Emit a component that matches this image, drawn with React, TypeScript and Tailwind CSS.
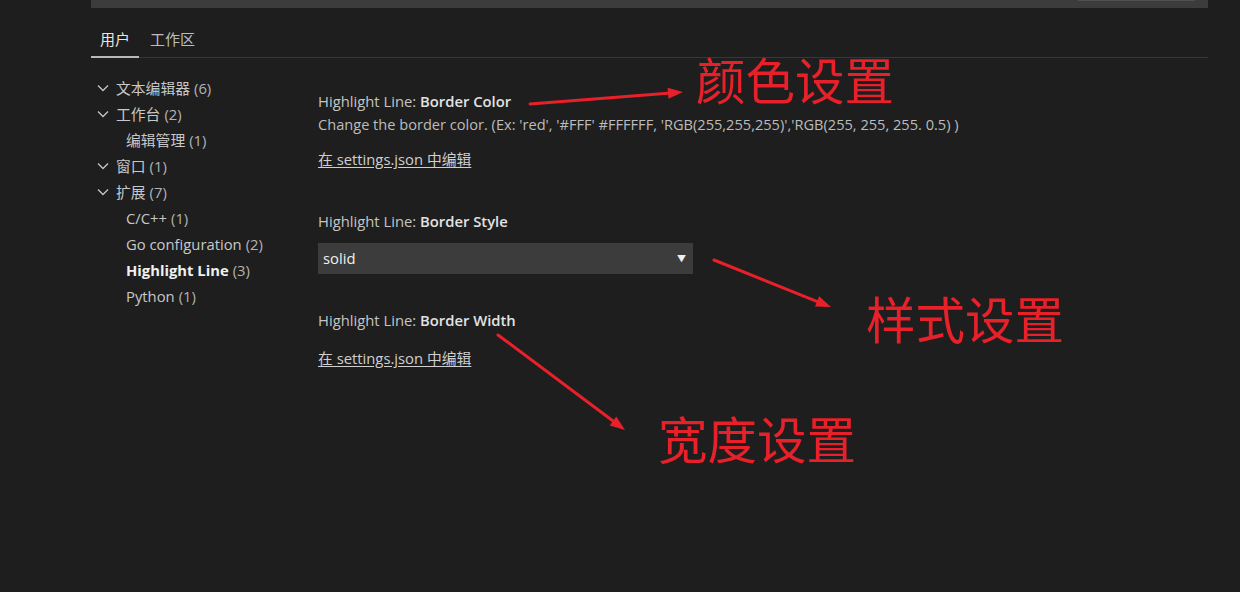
import React from "react";

const FONT = '"Open Sans", "Noto Sans CJK SC", sans-serif';
const CJK = '"Noto Sans CJK SC", sans-serif';

function Chevron() {
  return (
    <svg width="12" height="8" viewBox="0 0 12 8" className="shrink-0">
      <polyline points="1,1.5 6,6.5 11,1.5" fill="none" stroke="#c5c5c5" strokeWidth="1.3" />
    </svg>
  );
}

type Item = { label: string; count: number; level: number; bold?: boolean };

const items: Item[] = [
  { label: "文本编辑器", count: 6, level: 1 },
  { label: "工作台", count: 2, level: 1 },
  { label: "编辑管理", count: 1, level: 2 },
  { label: "窗口", count: 1, level: 1 },
  { label: "扩展", count: 7, level: 1 },
  { label: "C/C++", count: 1, level: 2 },
  { label: "Go configuration", count: 2, level: 2 },
  { label: "Highlight Line", count: 3, level: 2, bold: true },
  { label: "Python", count: 1, level: 2 },
];

function Title({ name }: { name: string }) {
  return (
    <div className="text-[14.8px] leading-[20px] text-[#c4c4c4]">
      Highlight Line: <span className="font-semibold text-[#e2e2e2]">{name}</span>
    </div>
  );
}

function EditLink({ className }: { className: string }) {
  return (
    <div className={"text-[14.8px] leading-[20px] text-[#cfcfcf] underline underline-offset-2 " + className}>
      在 settings.json 中编辑
    </div>
  );
}

function Arrow({ x1, y1, x2, y2 }: { x1: number; y1: number; x2: number; y2: number }) {
  const ang = Math.atan2(y2 - y1, x2 - x1);
  const L = 15;
  const W = 5.5;
  const bx = x2 - L * Math.cos(ang);
  const by = y2 - L * Math.sin(ang);
  const px = -Math.sin(ang) * W;
  const py = Math.cos(ang) * W;
  const lx = x2 - (L - 3) * Math.cos(ang);
  const ly = y2 - (L - 3) * Math.sin(ang);
  return (
    <g>
      <line x1={x1} y1={y1} x2={lx} y2={ly} stroke="#e8202a" strokeWidth="3" strokeLinecap="round" />
      <polygon points={`${x2},${y2} ${bx + px},${by + py} ${bx - px},${by - py}`} fill="#e8202a" />
    </g>
  );
}

export default function App() {
  return (
    <div className="relative w-[1240px] h-[592px] overflow-hidden bg-[#1e1e1e]" style={{ fontFamily: FONT }}>
      {/* top search bar */}
      <div className="ml-[91px] w-[1117px] h-[8px] bg-[#3c3c3c] flex justify-end pr-[13px]">
        <div className="w-[117px] h-[1px] bg-[#505050]" />
      </div>

      {/* tabs */}
      <div className="ml-[91px] w-[1117px] h-[50px] flex items-end border-b border-[#373737]">
        <div className="px-[9px] pb-[7px] text-[15px] leading-[20px] text-[#e6e6e6] border-b-2 border-[#b8b8b8] -mb-px">用户</div>
        <div className="pl-[11px] pb-[9px] text-[15px] leading-[20px] text-[#bdbdbd] -mb-px">工作区</div>
      </div>

      {/* body */}
      <div className="ml-[91px] flex">
        {/* tree */}
        <div className="w-[227px] pt-[17px] flex flex-col">
          {items.map((it) => (
            <div key={it.label} className="h-[26px] flex items-center pl-[6px] text-[14.8px] text-[#c8c8c8]">
              {it.level === 1 ? (
                <>
                  <Chevron />
                  <span className="ml-[7px]">{it.label}</span>
                </>
              ) : (
                <span className="ml-[29px]">
                  <span className={it.bold ? "font-bold text-[#f0f0f0]" : ""}>{it.label}</span>
                </span>
              )}
              <span className="ml-[4px] text-[#b4b4b4]">({it.count})</span>
            </div>
          ))}
        </div>

        {/* settings */}
        <div className="pt-[33px] flex flex-col">
          <Title name="Border Color" />
          <div className="mt-[2px] text-[14.6px] leading-[22px] text-[#bcbcbc] whitespace-nowrap">
            Change the border color. (Ex: 'red', '#FFF' #FFFFFF, 'RGB(255,255,255)','RGB(255, 255, 255. 0.5) )
          </div>
          <EditLink className="mt-[14px]" />

          <div className="mt-[42px]">
            <Title name="Border Style" />
          </div>
          <div className="mt-[12px] w-[375px] h-[31px] bg-[#3c3c3c] flex items-center justify-between pl-[5px] pr-[7px]">
            <span className="text-[14.8px] text-[#f0f0f0]">solid</span>
            <span className="text-[9px] text-[#f0f0f0]">▼</span>
          </div>

          <div className="mt-[36px]">
            <Title name="Border Width" />
          </div>
          <EditLink className="mt-[18px]" />
        </div>
      </div>

      {/* annotations */}
      <svg className="absolute inset-0 pointer-events-none" width="1240" height="592">
        <Arrow x1={530} y1={104} x2={683} y2={92} />
        <Arrow x1={714} y1={260} x2={831} y2={307} />
        <Arrow x1={498} y1={335} x2={625} y2={430} />
      </svg>
      <div className="absolute left-[696px] top-[49px] text-[49.5px] leading-[60px] text-[#e8202a]" style={{ fontFamily: CJK }}>颜色设置</div>
      <div className="absolute left-[866px] top-[288px] text-[49.5px] leading-[60px] text-[#e8202a]" style={{ fontFamily: CJK }}>样式设置</div>
      <div className="absolute left-[658px] top-[408px] text-[49.5px] leading-[60px] text-[#e8202a]" style={{ fontFamily: CJK }}>宽度设置</div>
    </div>
  );
}
